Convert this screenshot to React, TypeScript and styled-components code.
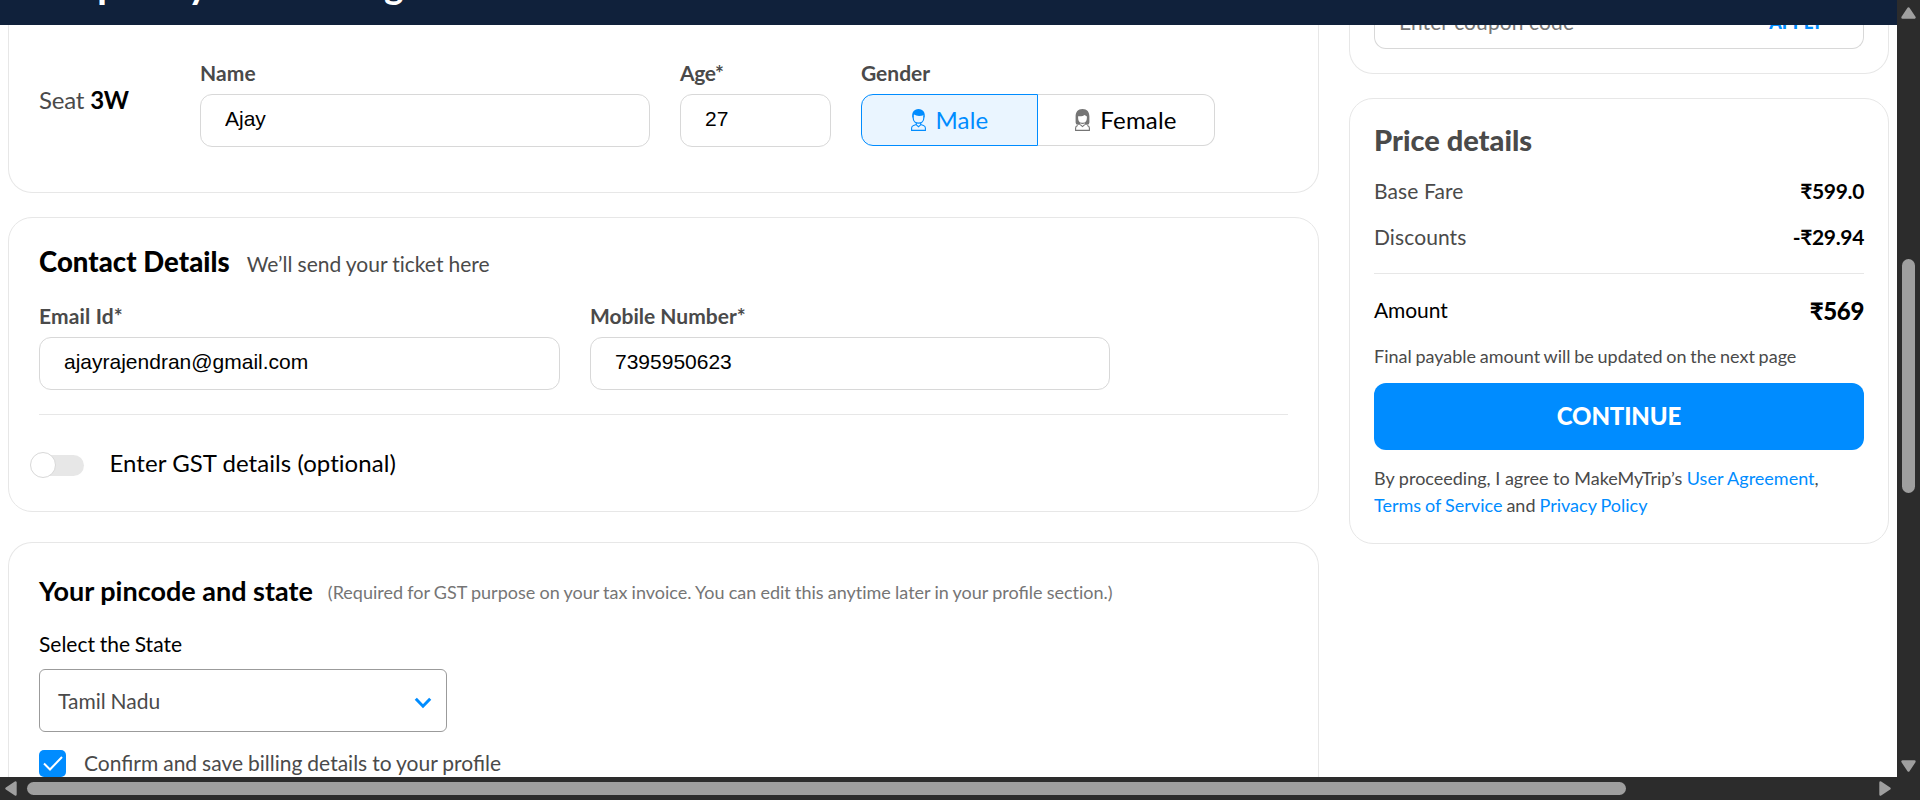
import React from "react";
import styled, { createGlobalStyle } from "styled-components";

const GlobalStyle = createGlobalStyle`
  * { box-sizing: border-box; }
  body {
    margin: 0;
    overflow: hidden;
    background: #fff;
    color: #4a4a4a;
    font-family: Lato, "Open Sans", sans-serif;
    font-variant-ligatures: no-common-ligatures;
  }
`;

const Screen = styled.div`
  display: grid;
  grid-template-columns: 1897px 23px;
  grid-template-rows: 777px 23px;
  width: 1920px;
  height: 800px;
  overflow: hidden;
  background: #2c2c2c;
`;
const Page = styled.div`
  display: flex;
  flex-direction: column;
  background: #fff;
  overflow: hidden;
`;
const Header = styled.header`
  display: flex;
  align-items: flex-end;
  flex: none;
  height: 25px;
  padding: 0 0 18px 22px;
  overflow: hidden;
  background: #10213b;
`;
const HeaderTitle = styled.h1`
  margin: 0;
  font-size: 36px;
  line-height: 43px;
  font-weight: 900;
  letter-spacing: 0.3px;
  color: #fff;
  white-space: nowrap;
`;
const Columns = styled.main`
  display: flex;
  gap: 30px;
  flex: 1;
  min-height: 0;
  padding-left: 8px;
`;
const Main = styled.div`
  display: flex;
  flex-direction: column;
  width: 1311px;
`;
const Aside = styled.aside`
  display: flex;
  flex-direction: column;
  gap: 24px;
  width: 540px;
`;
const Card = styled.section<{ $edge?: "top" | "bottom" }>`
  flex: none;
  border: 1px solid #e7e7e7;
  border-radius: ${(p) => (p.$edge === "top" ? "0 0 24px 24px" : p.$edge === "bottom" ? "24px 24px 0 0" : "24px")};
  ${(p) => p.$edge === "top" && "border-top: 0;"}
  ${(p) => p.$edge === "bottom" && "border-bottom: 0;"}
  background: #fff;
`;
const TravellerCard = styled(Card)`
  display: flex;
  height: 168px;
  padding: 35px 30px 0;
`;
const ContactCard = styled(Card)`
  height: 295px;
  margin-top: 24px;
  padding: 27px 30px 0;
`;
const PincodeCard = styled(Card)`
  height: 235px;
  margin-top: 30px;
  padding: 31px 30px 0;
`;
const Seat = styled.div`
  width: 161px;
  padding-top: 25px;
  font-size: 24px;
  line-height: 29px;
  letter-spacing: -0.2px;
  b { color: #000; font-weight: 700; letter-spacing: -0.3px; }
`;
const Field = styled.div<{ $w: number }>`
  width: ${(p) => p.$w}px;
  margin-right: 30px;
`;
const Label = styled.label<{ $tracking?: number }>`
  display: block;
  margin-bottom: 8px;
  font-size: 21px;
  line-height: 26px;
  font-weight: 700;
  letter-spacing: ${(p) => p.$tracking ?? 0}px;
`;
const Input = styled.input`
  display: block;
  width: 100%;
  height: 53px;
  padding: 0 24px 3px;
  border: 1px solid #d8d8d8;
  border-radius: 12px;
  outline: 0;
  background: #fff;
  color: #000;
  font: 21px "Liberation Sans", Arial, sans-serif;
`;
const Segmented = styled.div`
  display: flex;
  height: 52px;
`;
const Segment = styled.button<{ $active?: boolean }>`
  display: flex;
  align-items: center;
  justify-content: center;
  gap: 10px;
  width: 177px;
  padding: 0 0 2px;
  border: 1px solid ${(p) => (p.$active ? "#008cff" : "#d8d8d8")};
  border-left-width: ${(p) => (p.$active ? 1 : 0)}px;
  border-radius: ${(p) => (p.$active ? "12px 0 0 12px" : "0 12px 12px 0")};
  background: ${(p) => (p.$active ? "#eaf5ff" : "#fff")};
  color: ${(p) => (p.$active ? "#008cff" : "#000")};
  font: 24px Lato, sans-serif;
  letter-spacing: 0.2px;
  svg { display: block; margin-top: 2px; color: ${(p) => (p.$active ? "#008cff" : "#757575")}; }
`;
const TitleRow = styled.div<{ $gap: number }>`
  display: flex;
  align-items: baseline;
  gap: ${(p) => p.$gap}px;
  height: 34px;
`;
const Title = styled.h2<{ $heavy?: boolean }>`
  margin: 0;
  color: #000;
  font-size: ${(p) => (p.$heavy ? 27.5 : 27)}px;
  line-height: 34px;
  font-weight: ${(p) => (p.$heavy ? 900 : 700)};
  ${(p) => p.$heavy && "letter-spacing: 0.06px;"}
`;
const Hint = styled.span`
  font-size: 21px;
  word-spacing: -0.3px;
`;
const Note = styled.span`
  position: relative;
  top: -2px;
  font-size: 18px;
  word-spacing: -0.43px;
  color: #757575;
`;
const Joined = styled.span`
  font-variant-ligatures: common-ligatures;
`;
const FieldRow = styled.div`
  display: flex;
  margin-top: 24px;
`;
const Rule = styled.hr<{ $top: number }>`
  height: 1px;
  margin: ${(p) => p.$top}px 0 0;
  border: 0;
  background: #e7e7e7;
`;
const ToggleRow = styled.div`
  display: flex;
  align-items: center;
  gap: 25.5px;
  margin: 34px 0 0 -9px;
  height: 32px;
`;
const ToggleLabel = styled.span`
  margin-top: -6px;
  color: #000;
  font-size: 24px;
  line-height: 29px;
  letter-spacing: 0.05px;
`;
const Track = styled.span`
  display: flex;
  align-items: center;
  width: 54px;
  height: 21px;
  border-radius: 11px;
  background: linear-gradient(90deg, transparent 12px, #e7e7e7 12px);
`;
const Knob = styled.span`
  flex: none;
  width: 26px;
  height: 26px;
  border: 1px solid #d8d8d8;
  border-radius: 50%;
  background: #fff;
`;
const StateLabel = styled.div`
  margin-top: 23px;
  color: #000;
  font-size: 21px;
  line-height: 26px;
  word-spacing: -0.7px;
`;
const Select = styled.div`
  display: flex;
  align-items: center;
  justify-content: space-between;
  width: 408px;
  height: 63px;
  margin-top: 12px;
  padding: 0 14px 0 18px;
  border: 1px solid #9b9b9b;
  border-radius: 6px;
  font-size: 21px;
  word-spacing: -0.6px;
  svg { margin-top: 5px; }
`;
const CheckRow = styled.div`
  display: flex;
  align-items: center;
  gap: 18px;
  height: 27px;
  margin-top: 18px;
  font-size: 21px;
  line-height: 26px;
  word-spacing: -0.4px;
  ${Joined} { margin-top: -2px; }
`;
const Checkbox = styled.span`
  display: grid;
  place-items: center;
  width: 27px;
  height: 27px;
  border-radius: 5px;
  background: #008cff;
`;
const CouponCard = styled(Card)`
  height: 49px;
  padding: 0 24px 24px;
`;
const CouponBox = styled.div`
  display: flex;
  align-items: flex-end;
  justify-content: space-between;
  height: 24px;
  padding: 0 40px 13px 24px;
  overflow: hidden;
  border: 1px solid #d8d8d8;
  border-top: 0;
  border-radius: 0 0 12px 12px;
  color: #757575;
  font-size: 21px;
  line-height: 26px;
  letter-spacing: 0.1px;
  b { color: #008cff; font-size: 18px; font-weight: 900; letter-spacing: -0.2px; }
`;
const PriceCard = styled(Card)`
  height: 446px;
  padding: 24px 24px 0;
`;
const PriceTitle = styled.h2`
  margin: 0;
  font-size: 29px;
  line-height: 34px;
  font-weight: 900;
`;
const PriceRow = styled.div<{ $top: number; $total?: boolean }>`
  display: flex;
  align-items: center;
  justify-content: space-between;
  height: 26px;
  margin-top: ${(p) => p.$top}px;
  font-size: 21px;
  span { letter-spacing: 0.1px; }
  ${(p) => p.$total && "color: #000; span { letter-spacing: -0.1px; margin-top: -1px; }"}
  b {
    color: #000;
    font-size: ${(p) => (p.$total ? 24 : 21)}px;
    font-weight: ${(p) => (p.$total ? 900 : 700)};
    letter-spacing: -0.35px;
  }
`;
const Payable = styled.p`
  margin: 22px 0 0;
  font-size: 18px;
  line-height: 22px;
  word-spacing: -0.88px;
`;
const Continue = styled.button`
  display: block;
  width: 100%;
  height: 67px;
  margin-top: 16px;
  padding: 0 0 2px;
  border: 0;
  border-radius: 12px;
  background: #008cff;
  color: #fff;
  font: 900 24px Lato, sans-serif;
  letter-spacing: -0.12px;
`;
const Terms = styled.p`
  margin: 15px 0 0;
  font-size: 18px;
  line-height: 27px;
  white-space: nowrap;
  a { color: #008cff; }
`;
const TermsLine = styled.span<{ $squeeze?: boolean }>`
  display: block;
  word-spacing: ${(p) => (p.$squeeze ? -0.6 : 0)}px;
`;
const VScroll = styled.div`
  display: flex;
  flex-direction: column;
  align-items: center;
  padding: 7px 0 5px;
`;
const VThumb = styled.div`
  width: 13px;
  height: 234px;
  margin: 240px 0 auto;
  border-radius: 7px;
  background: #9f9f9f;
`;
const HScroll = styled.div`
  display: flex;
  align-items: center;
  padding: 0 6px 0 5px;
`;
const HThumb = styled.div`
  width: 1599px;
  height: 13px;
  margin: 0 auto 0 10px;
  border-radius: 7px;
  background: #9f9f9f;
`;

const Arrow = ({ angle }: { angle: 0 | 90 | 180 | 270 }) => {
  const upright = angle % 180 === 0;
  return (
    <svg width={upright ? 15 : 12} height={upright ? 12 : 15} viewBox={upright ? "-7.5 -6 15 12" : "-6 -7.5 12 15"}>
      <path
        d="M0 -4.5 L6 4.5 H-6 Z"
        transform={`rotate(${angle})`}
        fill="#9f9f9f"
        stroke="#9f9f9f"
        strokeWidth="2.4"
        strokeLinejoin="round"
      />
    </svg>
  );
};

const MaleIcon = () => (
  <svg width="15" height="22" viewBox="0 0 15 22" fill="none" stroke="currentColor">
    <path d="M1.500 9C.2 3.500 3 0 7.500 0S14.800 3.500 13.500 9L12.500 6.200C9.500 7.200 5.300 7.200 3.200 5.600Z" fill="currentColor" stroke="none" />
    <path d="M2.200 6.500V9C2.200 12 4.500 14.200 7.500 14.200S12.800 12 12.800 9V6.500" strokeWidth="1.200" />
    <path d="M5.300 13.800V15.800L7.500 17.700L9.700 15.800V13.800M5.300 15.600L2.500 16.500Q.6 17.200 .6 19V21.400H14.400V19Q14.400 17.200 12.500 16.500L9.700 15.600" strokeWidth="1.100" />
  </svg>
);

const FemaleIcon = () => (
  <svg width="15" height="22" viewBox="0 0 15 22" fill="none" stroke="currentColor">
    <path
      d="M7.500 0C2.800 0 .6 3 .6 7.500V13.500Q.6 15.800 2.800 15.800H5.300V13.800C3.900 12.800 3.100 11 3.100 8.600V7.200C6.500 7.400 8.500 6.800 9.600 6L11.900 7.400V8.600C11.900 11 11.100 12.800 9.700 13.800V15.800H12.200Q14.400 15.800 14.400 13.500V7.500C14.400 3 12.200 0 7.500 0Z"
      fill="currentColor"
      stroke="none"
    />
    <path d="M5.300 13.800Q7.500 15 9.700 13.800M5.300 15.600L7.500 17.600L9.700 15.600M2.800 16.500Q.6 17 .6 19V21.400H14.400V19Q14.400 17 12.200 16.500" strokeWidth="1.100" />
  </svg>
);

export default function App() {
  return (
    <>
      <GlobalStyle />
      <Screen>
        <Page>
          <Header>
            <HeaderTitle>Complete your booking</HeaderTitle>
          </Header>
          <Columns>
            <Main>
              <TravellerCard $edge="top">
                <Seat>
                  Seat <b>3W</b>
                </Seat>
                <Field $w={450}>
                  <Label $tracking={0.15}>Name</Label>
                  <Input defaultValue="Ajay" />
                </Field>
                <Field $w={151}>
                  <Label $tracking={-0.4}>Age*</Label>
                  <Input defaultValue="27" />
                </Field>
                <Field $w={354}>
                  <Label>Gender</Label>
                  <Segmented>
                    <Segment $active>
                      <MaleIcon />
                      Male
                    </Segment>
                    <Segment>
                      <FemaleIcon />
                      Female
                    </Segment>
                  </Segmented>
                </Field>
              </TravellerCard>
              <ContactCard>
                <TitleRow $gap={17}>
                  <Title $heavy>Contact Details</Title>
                  <Hint>We’ll send your ticket here</Hint>
                </TitleRow>
                <FieldRow>
                  <Field $w={521}>
                    <Label $tracking={0.15}>Email Id*</Label>
                    <Input defaultValue="ajayrajendran@gmail.com" />
                  </Field>
                  <Field $w={520}>
                    <Label>Mobile Number*</Label>
                    <Input defaultValue="7395950623" />
                  </Field>
                </FieldRow>
                <Rule $top={24} />
                <ToggleRow>
                  <Track>
                    <Knob />
                  </Track>
                  <ToggleLabel>Enter GST details (optional)</ToggleLabel>
                </ToggleRow>
              </ContactCard>
              <PincodeCard $edge="bottom">
                <TitleRow $gap={15}>
                  <Title>Your pincode and state</Title>
                  <Note>
                    (Required for GST purpose on your tax invoice. You can edit this anytime later in your{" "}
                    <Joined>profile</Joined> section.)
                  </Note>
                </TitleRow>
                <StateLabel>Select the State</StateLabel>
                <Select>
                  Tamil Nadu
                  <svg width="18" height="12" viewBox="0 0 18 12" fill="none" stroke="#008cff" strokeWidth="3">
                    <path d="M1.800 1.800L9 9.200L16.200 1.800" />
                  </svg>
                </Select>
                <CheckRow>
                  <Checkbox>
                    <svg width="20" height="15" viewBox="0 0 20 15" fill="none" stroke="#fff" strokeWidth="2">
                      <path d="M1 7.500L7 13.500L19 1" />
                    </svg>
                  </Checkbox>
                  <Joined>Confirm and save billing details to your profile</Joined>
                </CheckRow>
              </PincodeCard>
            </Main>
            <Aside>
              <CouponCard $edge="top">
                <CouponBox>
                  <span>Enter coupon code</span>
                  <b>APPLY</b>
                </CouponBox>
              </CouponCard>
              <PriceCard>
                <PriceTitle>Price details</PriceTitle>
                <PriceRow $top={20}>
                  <span>Base Fare</span>
                  <b>₹599.0</b>
                </PriceRow>
                <PriceRow $top={20}>
                  <span>Discounts</span>
                  <b>-₹29.94</b>
                </PriceRow>
                <Rule $top={24} />
                <PriceRow $top={23} $total>
                  <span>Amount</span>
                  <b>₹569</b>
                </PriceRow>
                <Payable>Final payable amount will be updated on the next page</Payable>
                <Continue>CONTINUE</Continue>
                <Terms>
                  <TermsLine>
                    By proceeding, I agree to MakeMyTrip’s <a>User Agreement</a>,
                  </TermsLine>
                  <TermsLine $squeeze>
                    <a>Terms of Service</a> and <a>Privacy Policy</a>
                  </TermsLine>
                </Terms>
              </PriceCard>
            </Aside>
          </Columns>
        </Page>
        <VScroll>
          <Arrow angle={0} />
          <VThumb />
          <Arrow angle={180} />
        </VScroll>
        <HScroll>
          <Arrow angle={270} />
          <HThumb />
          <Arrow angle={90} />
        </HScroll>
      </Screen>
    </>
  );
}
